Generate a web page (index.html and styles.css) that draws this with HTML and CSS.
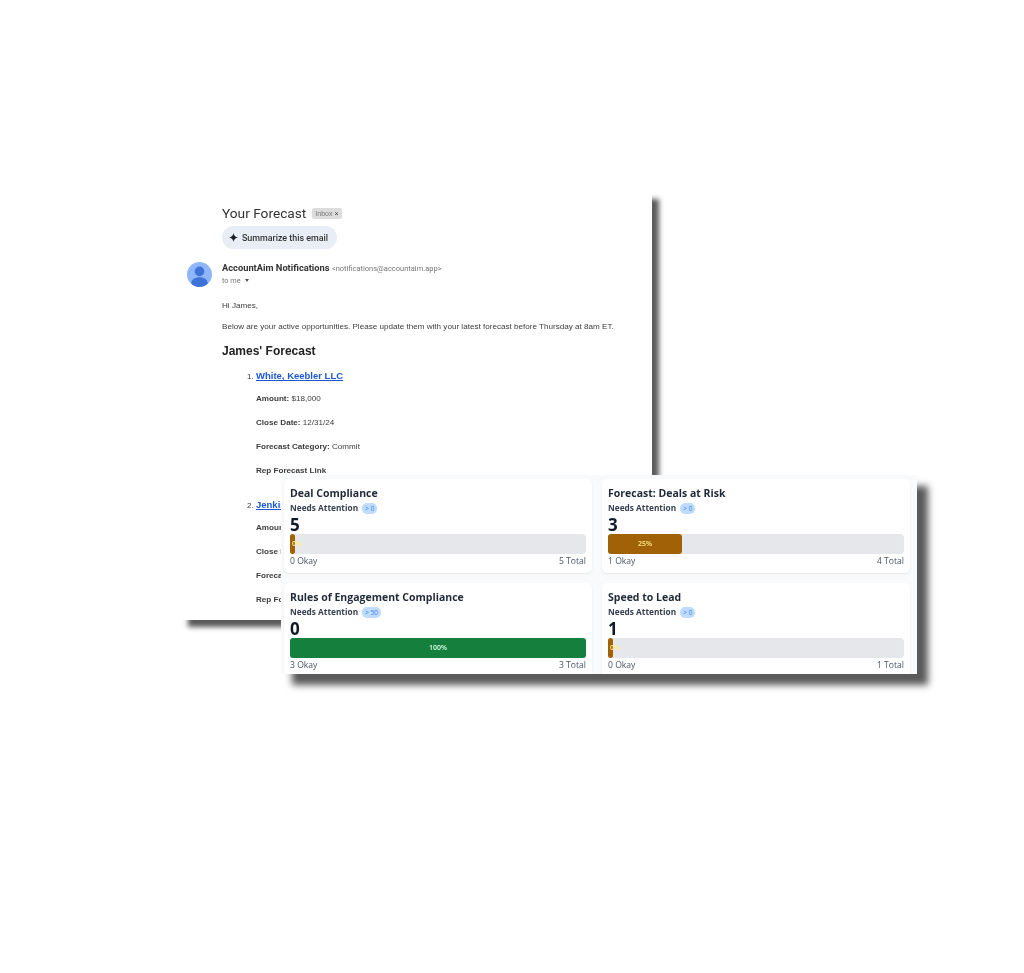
FILE: index.html
```html
<!DOCTYPE html>
<html lang="en">
<head>
    <meta charset="UTF-8">
    <title>Your Forecast</title>
    <link rel="stylesheet" href="styles.css">
</head>
<body>
    <div class="email">
        <div class="subject-row">
            <h1 class="subject">Your Forecast</h1>
            <span class="inbox-tag">Inbox <span class="tag-x">×</span></span>
        </div>
        <div class="summarize">
            <svg class="spark" viewBox="0 0 12 12"><path d="M6 0C6.5 3.6 8.4 5.5 12 6C8.4 6.5 6.5 8.4 6 12C5.5 8.4 3.6 6.5 0 6C3.6 5.5 5.5 3.6 6 0Z"/></svg>
            <span>Summarize this email</span>
        </div>
        <div class="sender">
            <svg class="avatar" viewBox="0 0 26 26">
                <circle cx="13" cy="13" r="13" fill="#8fb6fa"/>
                <circle cx="13" cy="9.8" r="5" fill="#3d73d9"/>
                <path d="M4.4 22.4C4.6 18 8.4 15.8 13 15.8C17.6 15.8 21.4 18 21.6 22.4C19.6 24.8 16.6 26 13 26C9.4 26 6.4 24.8 4.4 22.4Z" fill="#3d73d9"/>
            </svg>
            <div>
                <div class="from"><b>AccountAim Notifications</b> <span class="address">&lt;notifications@accountaim.app&gt;</span></div>
                <div class="to">to me <span class="caret"></span></div>
            </div>
        </div>
        <div class="body-text">
            <p>Hi James,</p>
            <p>Below are your active opportunities. Please update them with your latest forecast before Thursday at 8am ET.</p>
            <h2>James' Forecast</h2>
            <ol>
                <li>
                    <a href="#">White, Keebler LLC</a>
                    <p><b>Amount:</b> $18,000</p>
                    <p><b>Close Date:</b> 12/31/24</p>
                    <p><b>Forecast Category:</b> Commit</p>
                    <p><b>Rep Forecast Link</b></p>
                </li>
                <li>
                    <a href="#">Jenkins</a>
                    <p><b>Amount:</b></p>
                    <p><b>Close Date:</b></p>
                    <p><b>Forecast Category:</b></p>
                    <p><b>Rep Forecast Link</b></p>
                </li>
            </ol>
        </div>
    </div>

    <div class="dashboard">
        <div class="card">
            <h3>Deal Compliance</h3>
            <div class="attention">Needs Attention <span class="badge">&gt; 0</span></div>
            <div class="count">5</div>
            <div class="track"><div class="fill warn empty">0%</div></div>
            <div class="totals"><span>0 Okay</span><span>5 Total</span></div>
        </div>
        <div class="card">
            <h3>Forecast: Deals at Risk</h3>
            <div class="attention">Needs Attention <span class="badge">&gt; 0</span></div>
            <div class="count">3</div>
            <div class="track"><div class="fill warn" style="width: 25%">25%</div></div>
            <div class="totals"><span>1 Okay</span><span>4 Total</span></div>
        </div>
        <div class="card">
            <h3>Rules of Engagement Compliance</h3>
            <div class="attention">Needs Attention <span class="badge">&gt; 50</span></div>
            <div class="count">0</div>
            <div class="track"><div class="fill good" style="width: 100%">100%</div></div>
            <div class="totals"><span>3 Okay</span><span>3 Total</span></div>
        </div>
        <div class="card">
            <h3>Speed to Lead</h3>
            <div class="attention">Needs Attention <span class="badge">&gt; 0</span></div>
            <div class="count">1</div>
            <div class="track"><div class="fill warn empty">0%</div></div>
            <div class="totals"><span>0 Okay</span><span>1 Total</span></div>
        </div>
    </div>
</body>
</html>
```
FILE: styles.css
```css
body {
    margin: 0;
    height: 973px;
    overflow: hidden;
    background: #fff;
    position: relative;
    font-family: "Liberation Sans", Arial, sans-serif;
}

/* email window */
.email {
    position: absolute;
    left: 181px;
    top: 192px;
    width: 471px;
    height: 428px;
    box-sizing: border-box;
    padding: 13px 0 0 6px;
    overflow: hidden;
    background: #fff;
    color: #3c3c3c;
    box-shadow: 7px 7px 5px #5a5a5a;
    filter: blur(0.5px);
}
.subject-row {
    display: flex;
    align-items: center;
    gap: 6px;
    margin-left: 35px;
    height: 16px;
}
.subject {
    margin: 0;
    font-family: Roboto, sans-serif;
    font-size: 13.7px;
    font-weight: 400;
    color: #333;
}
.inbox-tag {
    background: #ddd;
    color: #777;
    font-size: 7px;
    padding: 2px 3px;
    border-radius: 2px;
}
.tag-x {
    color: #444;
}
.summarize {
    display: flex;
    align-items: center;
    gap: 4px;
    width: 115px;
    height: 23px;
    box-sizing: border-box;
    margin: 5px 0 0 35px;
    padding-left: 7px;
    background: #e9eef6;
    border-radius: 12px;
    font-family: Roboto, sans-serif;
    font-size: 8.9px;
    font-weight: 500;
    color: #333;
}
.spark {
    width: 9px;
    height: 9px;
    fill: #1f1f1f;
}
.sender {
    display: flex;
    gap: 10px;
    margin-top: 13px;
}
.avatar {
    width: 25px;
    height: 25px;
}
.from {
    font-family: Roboto, sans-serif;
    font-size: 9.3px;
    color: #333;
}
.from b {
    font-weight: 700;
}
.address {
    color: #777;
    font-size: 7.5px;
}
.to {
    margin-top: 2.5px;
    font-family: Roboto, sans-serif;
    font-size: 7.3px;
    color: #777;
}
.caret {
    display: inline-block;
    margin-left: 3px;
    vertical-align: middle;
    border: 2.5px solid transparent;
    border-top: 3px solid #555;
    border-bottom: 0;
}
.body-text {
    margin: 14px 0 0 35px;
    font-size: 8.1px;
    line-height: 10px;
}
.body-text p {
    margin: 0 0 11px;
}
.body-text h2 {
    margin: 12px 0 0;
    font-size: 12px;
    line-height: 14px;
    color: #222;
}
.body-text ol {
    margin: 12px 0 0;
    padding-left: 34px;
}
.body-text li {
    margin-bottom: 23.5px;
}
.body-text li a {
    color: #1a56d6;
    font-size: 9.5px;
    font-weight: bold;
    line-height: 12px;
}
.body-text li p {
    margin: 0 0 14px;
}
.body-text li p:first-of-type {
    margin-top: 11.5px;
}

/* dashboard window */
.dashboard {
    position: absolute;
    left: 281px;
    top: 475px;
    width: 636px;
    height: 199px;
    box-sizing: border-box;
    padding: 4px 7px 0 3px;
    overflow: hidden;
    display: grid;
    grid-template-columns: 308px 308px;
    grid-auto-rows: 94px;
    gap: 10px;
    background: #f9fafb;
    font-family: "Open Sans", sans-serif;
    color: #1f2937;
    box-shadow: 11px 11px 7px #5a5a5a;
    filter: blur(0.5px);
}
.card {
    background: #fff;
    border-radius: 5px;
    box-shadow: 0 1px 2px rgba(0, 0, 0, 0.08);
    padding: 7px 6px 0;
}
.card h3 {
    margin: 0;
    font-size: 10.5px;
    line-height: 14px;
    font-weight: 700;
}
.attention {
    margin-top: 2px;
    font-size: 8.3px;
    line-height: 12px;
    font-weight: 700;
    color: #374151;
}
.badge {
    margin-left: 2px;
    padding: 1px 3px;
    border-radius: 5px;
    background: #bfdbfe;
    color: #3b82f6;
    font-size: 6.5px;
    font-weight: 400;
}
.count {
    font-size: 17px;
    line-height: 20px;
    font-weight: 700;
    color: #111827;
    height: 16px;
}
.track {
    height: 20px;
    margin-top: 3px;
    background: #e5e7eb;
    border-radius: 4px;
}
.fill {
    height: 100%;
    border-radius: 3px;
    font-size: 7px;
    font-weight: 600;
    line-height: 20px;
    text-align: center;
}
.fill.warn {
    background: #a16207;
    color: #fef08a;
}
.fill.good {
    background: #15803d;
    color: #dcfce7;
}
.fill.empty {
    width: 5px;
    white-space: nowrap;
    text-indent: 2px;
    text-align: left;
}
.totals {
    display: flex;
    justify-content: space-between;
    margin-top: 2px;
    font-size: 8.6px;
    line-height: 11px;
    color: #4b5563;
}
```
